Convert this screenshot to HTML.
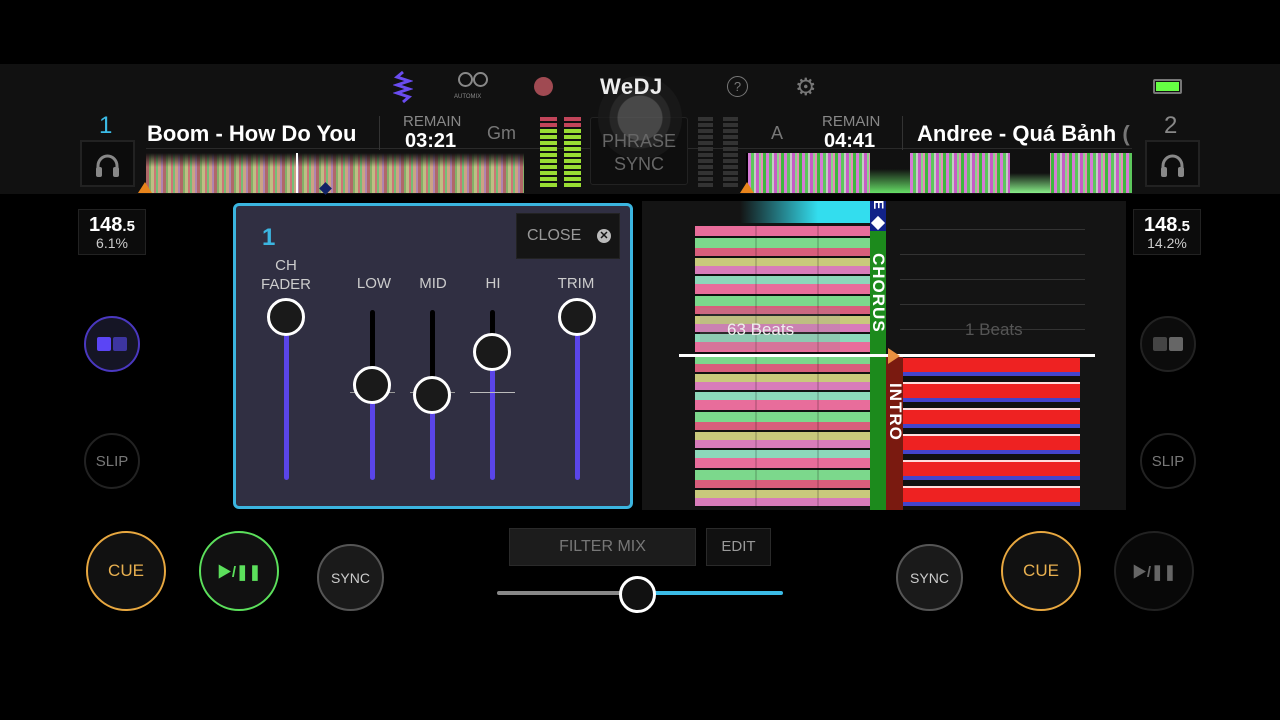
<!DOCTYPE html>
<html><head><meta charset="utf-8"><style>
*{margin:0;padding:0;box-sizing:border-box}
body{width:1280px;height:720px;background:#000;position:relative;overflow:hidden;font-family:"Liberation Sans","Noto Sans CJK SC",sans-serif;color:#fff}
.a{position:absolute}
.hdr{left:0;top:64px;width:1280px;height:130px;background:#111}
.wave{background:repeating-linear-gradient(90deg,#c77 0 3px,#9c7 3px 5px,#dd9 5px 8px,#e88 8px 10px,#8d8 10px 12px,#eb9 12px 15px,#c9c 15px 17px)}
.wave2{background:repeating-linear-gradient(90deg,#e8e 0 3px,#6d6 3px 6px,#ddd 6px 8px,#d6d 8px 11px,#9e9 11px 13px,#f9c 13px 15px,#4c4 15px 18px)}
.circ{border-radius:50%;display:flex;align-items:center;justify-content:center}
.knob{width:38px;height:38px;border-radius:50%;background:#1a1a1a;border:3px solid #fff;position:absolute}
.lbl{position:absolute;color:#ccc;font-size:15px;text-align:center}
.bar{position:absolute;width:5px;border-radius:3px}
.strL{background:repeating-linear-gradient(180deg,#f7a 0 10px,#111 10px 12px,#8e9 12px 22px,#e68 22px 30px,#111 30px 32px,#dd8 32px 40px,#e8c 40px 48px,#111 48px 50px,#9ec 50px 58px)}
.strR{background:repeating-linear-gradient(180deg,#e22 0 14px,#44c 14px 18px,#111 18px 24px,#fdd 24px 26px)}
.hp{position:absolute;width:55px;height:47px;border:2px solid #222;background:#0c0c0c}
</style></head><body>
<div class="a hdr"></div>
<div class="a" style="left:146px;top:148px;width:986px;height:1px;background:#2a2a2a"></div>
<!-- phrase sync (behind logo) -->
<div class="a" style="left:590px;top:117px;width:98px;height:68px;border:1px solid #222;border-radius:3px;background:#0e0e0e"></div>
<div class="a" style="left:598px;top:76px;width:84px;height:84px;border-radius:50%;background:radial-gradient(circle,#5a5a5a 0 22px,#2e2e2e 23px 30px,#1a1a1a 31px 42px);opacity:.75"></div>
<div class="a" style="left:590px;top:130px;width:98px;text-align:center;font-size:18px;line-height:23px;color:#666">PHRASE<br>SYNC</div>
<!-- top icons -->
<svg class="a" style="left:393px;top:70px" width="20" height="34"><path d="M10 2 L4 7 L16 11 L4 15 L16 19 L4 23 L16 27 L10 32" stroke="#6a4cf0" stroke-width="3" fill="none"/></svg>
<div class="a" style="left:456px;top:72px;width:34px;height:18px;"><div class="a circ" style="left:2px;top:0;width:15px;height:15px;border:2px solid #888"></div><div class="a circ" style="left:17px;top:0;width:15px;height:15px;border:2px solid #888"></div></div>
<div class="a" style="left:454px;top:94px;font-size:6px;color:#888">AUTOMIX</div>
<div class="a" style="left:534px;top:77px;width:19px;height:19px;border-radius:50%;background:#a04a52"></div>
<div class="a" style="left:600px;top:74px;font-size:22px;font-weight:bold;color:#eee;letter-spacing:0.5px">WeDJ</div>
<div class="a circ" style="left:727px;top:76px;width:21px;height:21px;border:1.5px solid #777;color:#777;font-size:13px">?</div>
<div class="a" style="left:795px;top:73px;font-size:24px;color:#777">⚙</div>
<div class="a" style="left:1153px;top:79px;width:29px;height:15px;border:2px solid #777;border-radius:2px;padding:1px"><div style="width:100%;height:100%;background:#6f4"></div></div>
<!-- deck numbers -->
<div class="a" style="left:99px;top:112px;font-size:24px;color:#3bbbe6">1</div>
<div class="a" style="left:1164px;top:112px;font-size:24px;color:#888">2</div>
<div class="hp" style="left:80px;top:140px"><svg width="51" height="43"><path d="M16 32 V24 A9.5 10 0 0 1 35 24 V32" stroke="#888" stroke-width="3" fill="none"/><rect x="14" y="25" width="6" height="10" rx="2" fill="#888"/><rect x="31" y="25" width="6" height="10" rx="2" fill="#888"/></svg></div>
<div class="hp" style="left:1145px;top:140px"><svg width="51" height="43"><path d="M16 32 V24 A9.5 10 0 0 1 35 24 V32" stroke="#888" stroke-width="3" fill="none"/><rect x="14" y="25" width="6" height="10" rx="2" fill="#888"/><rect x="31" y="25" width="6" height="10" rx="2" fill="#888"/></svg></div>
<div class="a" style="left:147px;top:121px;font-size:22px;font-weight:bold;color:#fff">Boom - How Do You</div>
<div class="a" style="left:379px;top:116px;width:1px;height:34px;background:#333"></div>
<div class="a" style="left:403px;top:113px;font-size:15px;color:#888">REMAIN</div>
<div class="a" style="left:405px;top:130px;font-size:20px;font-weight:bold;color:#fff">03:21</div>
<div class="a" style="left:487px;top:123px;font-size:18px;color:#777">Gm</div>
<div class="a" style="left:771px;top:123px;font-size:18px;color:#777">A</div>
<div class="a" style="left:822px;top:113px;font-size:15px;color:#888">REMAIN</div>
<div class="a" style="left:824px;top:130px;font-size:20px;font-weight:bold;color:#fff">04:41</div>
<div class="a" style="left:902px;top:116px;width:1px;height:34px;background:#333"></div>
<div class="a" style="left:917px;top:121px;font-size:22px;font-weight:bold;color:#fff;white-space:nowrap">Andree - Quá Bảnh <span style="color:#777">(</span></div>
<!-- meters -->
<div class="a" style="left:540px;top:117px;width:17px;height:70px;background:repeating-linear-gradient(180deg,#9d3 0 4px,transparent 4px 6px)"></div>
<div class="a" style="left:564px;top:117px;width:17px;height:70px;background:repeating-linear-gradient(180deg,#9d3 0 4px,transparent 4px 6px)"></div>
<div class="a" style="left:540px;top:117px;width:17px;height:12px;background:repeating-linear-gradient(180deg,#c2455a 0 4px,transparent 4px 6px)"></div>
<div class="a" style="left:564px;top:117px;width:17px;height:12px;background:repeating-linear-gradient(180deg,#c2455a 0 4px,transparent 4px 6px)"></div>
<div class="a" style="left:698px;top:117px;width:15px;height:70px;background:repeating-linear-gradient(180deg,#333 0 4px,transparent 4px 6px)"></div>
<div class="a" style="left:723px;top:117px;width:15px;height:70px;background:repeating-linear-gradient(180deg,#333 0 4px,transparent 4px 6px)"></div>
<!-- waveforms -->
<div class="a wave" style="left:146px;top:153px;width:378px;height:40px;opacity:.85"></div>
<div class="a" style="left:146px;top:153px;width:378px;height:40px;background:linear-gradient(#111 0%,rgba(17,17,17,0) 35%)"></div>
<div class="a" style="left:296px;top:153px;width:2px;height:40px;background:#fff"></div>
<div class="a" style="left:746px;top:153px;width:386px;height:40px;background:#000"></div>
<div class="a wave2" style="left:748px;top:153px;width:384px;height:40px;opacity:.9"></div>
<div class="a" style="left:870px;top:153px;width:40px;height:40px;background:linear-gradient(#111 40%,#6d6)"></div>
<div class="a" style="left:1010px;top:153px;width:40px;height:40px;background:linear-gradient(#111 50%,#8e8)"></div>
<div class="a" style="left:138px;top:182px;width:0;height:0;border-left:7px solid transparent;border-right:7px solid transparent;border-bottom:11px solid #e8841c"></div>
<div class="a" style="left:740px;top:182px;width:0;height:0;border-left:7px solid transparent;border-right:7px solid transparent;border-bottom:11px solid #e8841c"></div>
<div class="a" style="left:321px;top:184px;width:9px;height:9px;background:#126;transform:rotate(45deg)"></div>
<!-- bpm -->
<div class="a" style="left:78px;top:209px;width:68px;height:46px;border:1px solid #222;background:#0c0c0c;text-align:center;line-height:17px;padding-top:7px"><b style="font-size:20px">148</b><b style="font-size:15px">.5</b><br><span style="font-size:14px;color:#ccc">6.1%</span></div>
<div class="a" style="left:1133px;top:209px;width:68px;height:46px;border:1px solid #222;background:#0c0c0c;text-align:center;line-height:17px;padding-top:7px"><b style="font-size:20px">148</b><b style="font-size:15px">.5</b><br><span style="font-size:14px;color:#ccc">14.2%</span></div>
<!-- side buttons -->
<div class="a circ" style="left:84px;top:316px;width:56px;height:56px;border:2px solid #4a38c0;background:#151525"><div style="width:14px;height:14px;background:#5b45f5;margin-right:2px;border-radius:2px"></div><div style="width:14px;height:14px;background:#3d35a0;border-radius:2px"></div></div>
<div class="a circ" style="left:1140px;top:316px;width:56px;height:56px;border:2px solid #222;background:#0c0c0c"><div style="width:14px;height:14px;background:#444;margin-right:2px;border-radius:2px"></div><div style="width:14px;height:14px;background:#666;border-radius:2px"></div></div>
<div class="a circ" style="left:84px;top:433px;width:56px;height:56px;border:2px solid #222;color:#777;font-size:15px">SLIP</div>
<div class="a circ" style="left:1140px;top:433px;width:56px;height:56px;border:2px solid #222;color:#777;font-size:15px">SLIP</div>
<!-- mixer panel -->
<div class="a" style="left:233px;top:203px;width:400px;height:306px;border:3px solid #3bb5e0;border-radius:6px;background:#302f42"></div>
<div class="a" style="left:262px;top:224px;font-size:24px;font-weight:bold;color:#3bb5e0">1</div>
<div class="a" style="left:516px;top:213px;width:104px;height:46px;background:#151515;border:1px solid #222;color:#999;font-size:16px;line-height:44px;padding-left:10px">CLOSE <span class="a circ" style="left:80px;top:15px;width:14px;height:14px;background:#bbb;color:#151515;font-size:11px;font-weight:bold">✕</span></div>
<div class="lbl" style="left:251px;top:256px;width:70px;line-height:19px">CH<br>FADER</div>
<div class="lbl" style="left:344px;top:275px;width:60px">LOW</div>
<div class="lbl" style="left:403px;top:275px;width:60px">MID</div>
<div class="lbl" style="left:463px;top:275px;width:60px">HI</div>
<div class="lbl" style="left:546px;top:275px;width:60px">TRIM</div>
<div class="bar" style="left:284px;top:317px;height:163px;background:#5a45e8"></div>
<div class="bar" style="left:575px;top:317px;height:163px;background:#5a45e8"></div>
<div class="bar" style="left:370px;top:310px;height:75px;background:#000"></div>
<div class="bar" style="left:370px;top:385px;height:95px;background:#5a45e8"></div>
<div class="bar" style="left:430px;top:310px;height:85px;background:#000"></div>
<div class="bar" style="left:430px;top:395px;height:85px;background:#5a45e8"></div>
<div class="bar" style="left:490px;top:310px;height:42px;background:#000"></div>
<div class="bar" style="left:490px;top:352px;height:128px;background:#5a45e8"></div>
<div class="a" style="left:350px;top:392px;width:45px;height:1px;background:#999"></div>
<div class="a" style="left:410px;top:392px;width:45px;height:1px;background:#999"></div>
<div class="a" style="left:470px;top:392px;width:45px;height:1px;background:#bbb"></div>
<div class="knob" style="left:267px;top:298px"></div>
<div class="knob" style="left:558px;top:298px"></div>
<div class="knob" style="left:353px;top:366px"></div>
<div class="knob" style="left:413px;top:376px"></div>
<div class="knob" style="left:473px;top:333px"></div>
<!-- big waveform panel -->
<div class="a" style="left:642px;top:201px;width:484px;height:309px;background:#141414"></div>
<div class="a strL" style="left:695px;top:226px;width:175px;height:282px;opacity:.9"></div>
<div class="a" style="left:695px;top:226px;width:175px;height:282px;background:repeating-linear-gradient(90deg,rgba(0,0,0,0) 0 60px,rgba(0,0,0,.15) 60px 62px)"></div>
<div class="a" style="left:740px;top:201px;width:130px;height:22px;background:linear-gradient(90deg,#141414,#3de 60%)"></div>
<div class="a" style="left:870px;top:201px;width:16px;height:309px;background:#1c8a1c"></div>
<div class="a" style="left:870px;top:201px;width:16px;height:30px;background:#128"></div>
<div class="a" style="left:873px;top:218px;width:10px;height:10px;background:#fff;transform:rotate(45deg)"></div>
<div class="a" style="left:871px;top:200px;font-size:14px;font-weight:bold;color:#fff;writing-mode:vertical-rl">E</div>
<div class="a" style="left:868px;top:253px;font-size:17px;font-weight:bold;color:#fff;writing-mode:vertical-rl;letter-spacing:1px">CHORUS</div>
<div class="a" style="left:886px;top:356px;width:17px;height:154px;background:#7a1a10"></div>
<div class="a" style="left:885px;top:383px;font-size:17px;font-weight:bold;color:#fff;writing-mode:vertical-rl;letter-spacing:1px">INTRO</div>
<div class="a strR" style="left:903px;top:358px;width:177px;height:152px"></div>
<div class="a" style="left:900px;top:205px;width:185px;height:150px;background:repeating-linear-gradient(180deg,transparent 0 24px,#333 24px 25px)"></div>
<div class="a" style="left:700px;top:308px;width:140px;height:42px;background:rgba(150,150,150,.2)"></div>
<div class="a" style="left:727px;top:320px;font-size:17px;color:#eee">63 Beats</div>
<div class="a" style="left:965px;top:320px;font-size:17px;color:#555">1 Beats</div>
<div class="a" style="left:679px;top:354px;width:416px;height:3px;background:#fff"></div>
<div class="a" style="left:888px;top:348px;width:0;height:0;border-top:8px solid transparent;border-bottom:8px solid transparent;border-left:12px solid #e89040"></div>
<!-- bottom -->
<div class="a circ" style="left:86px;top:531px;width:80px;height:80px;border:2px solid #e8a840;background:#111;color:#e8b050;font-size:17px">CUE</div>
<div class="a circ" style="left:199px;top:531px;width:80px;height:80px;border:2px solid #5ce05c;background:#111;color:#5ce05c;font-size:15px;font-weight:bold">▶/❚❚</div>
<div class="a circ" style="left:317px;top:544px;width:67px;height:67px;border:2px solid #555;background:#1a1a1a;color:#ccc;font-size:14px">SYNC</div>
<div class="a circ" style="left:896px;top:544px;width:67px;height:67px;border:2px solid #555;background:#1a1a1a;color:#ccc;font-size:14px">SYNC</div>
<div class="a circ" style="left:1001px;top:531px;width:80px;height:80px;border:2px solid #e8a840;background:#111;color:#e8b050;font-size:17px">CUE</div>
<div class="a circ" style="left:1114px;top:531px;width:80px;height:80px;border:2px solid #222;background:#080808;color:#666;font-size:15px;font-weight:bold">▶/❚❚</div>
<div class="a" style="left:509px;top:528px;width:187px;height:38px;background:#1c1c1c;border:1px solid #2a2a2a;color:#777;font-size:16px;text-align:center;line-height:36px">FILTER MIX</div>
<div class="a" style="left:706px;top:528px;width:65px;height:38px;background:#111;border:1px solid #2a2a2a;color:#999;font-size:15px;text-align:center;line-height:36px">EDIT</div>
<div class="a" style="left:497px;top:591px;width:140px;height:4px;border-radius:2px;background:#888"></div>
<div class="a" style="left:637px;top:591px;width:146px;height:4px;border-radius:2px;background:#3bbbe6"></div>
<div class="knob" style="left:619px;top:576px;width:37px;height:37px;background:#111"></div>
</body></html>
